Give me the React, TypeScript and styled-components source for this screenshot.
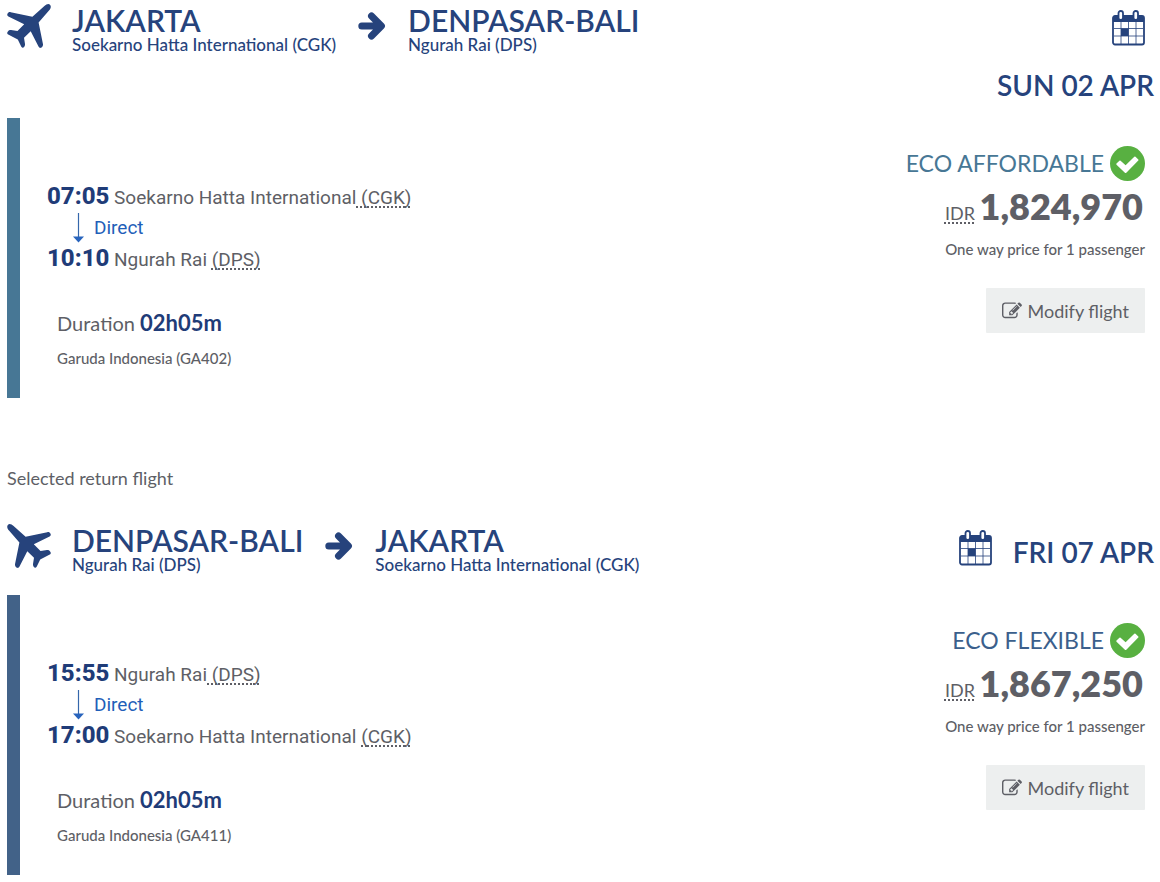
import React from "react";
import styled, { createGlobalStyle } from "styled-components";

const navy = "#26437c";
const grey = "#5e5f66";

const GlobalStyle = createGlobalStyle`
  *, *::before, *::after { box-sizing: border-box; }
  body {
    margin: 0;
    background: #fff;
    color: ${grey};
    font-family: Lato, "Liberation Sans", sans-serif;
  }
  h2, h3, p { margin: 0; }
  svg { display: block; flex: none; }
`;

const Page = styled.main`
  padding: 0 6px 0 7px;
`;

const Leg = styled.section`
  display: flex;
  flex-direction: column;
`;

const LegHeader = styled.header<{ $stacked: boolean }>`
  display: flex;
  justify-content: space-between;
  align-items: flex-start;
  min-height: ${(p) => (p.$stacked ? 118 : 75)}px;
  padding-top: 4px;
  color: ${navy};
`;

const Route = styled.div`
  display: flex;
  align-items: flex-start;
`;

const PlaneIcon = styled.svg`
  margin-right: 21px;
`;

const ArrowIcon = styled.svg`
  margin: 8px 22px 0;
`;

const City = styled.h2`
  font-size: 30px;
  line-height: 32px;
  font-weight: 600;
`;

const Airport = styled.p`
  font-size: 17px;
  line-height: 18px;
  font-weight: 500;
`;

const DateBox = styled.div<{ $stacked: boolean }>`
  display: flex;
  flex-direction: ${(p) => (p.$stacked ? "column" : "row")};
  align-items: ${(p) => (p.$stacked ? "flex-end" : "flex-start")};
  gap: 21px;
  padding-top: 6px;
`;

const CalendarWrap = styled.span<{ $stacked: boolean }>`
  margin-right: ${(p) => (p.$stacked ? 9 : 0)}px;
`;

const DateText = styled.time<{ $stacked: boolean }>`
  font-size: 28px;
  line-height: 36px;
  font-weight: 600;
  margin-top: ${(p) => (p.$stacked ? 0 : 4)}px;
`;

const LegBody = styled.div<{ $accent: string }>`
  display: flex;
  justify-content: space-between;
  min-height: 280px;
  padding: 0 9px 0 27px;
  border-left: 13px solid ${(p) => p.$accent};
`;

const Details = styled.div`
  padding-top: 63px;
`;

const Stop = styled.p`
  font: 19px/31px Roboto, sans-serif;
`;

const Clock = styled.time`
  color: #1f3c78;
  font-size: 24px;
  font-weight: 800;
`;

const Connection = styled.p`
  display: flex;
  gap: 10px;
  padding-left: 26px;
  color: #1f5fb9;
  font: 19px/30px Roboto, sans-serif;
`;

const Abbr = styled.abbr`
  text-decoration: underline dotted 2px;
  text-underline-offset: 2px;
  text-decoration-skip-ink: none;
`;

const Facts = styled.div`
  padding: 30px 0 0 10px;
`;

const Duration = styled.p`
  font-size: 20px;
  line-height: 36px;

  strong {
    color: #1f3c78;
    font-size: 22px;
    font-weight: 700;
  }
`;

const Carrier = styled.p`
  font-size: 15px;
  line-height: 34px;
  font-weight: 500;
`;

const Fare = styled.div`
  display: flex;
  flex-direction: column;
  align-items: flex-end;
  padding-top: 27px;
`;

const FareName = styled.h3<{ $accent: string }>`
  display: flex;
  align-items: center;
  gap: 6px;
  color: ${(p) => p.$accent};
  font-size: 23px;
  line-height: 36px;
  font-weight: 400;
`;

const Price = styled.p`
  padding: 3px 2px 0 0;
  font-size: 18px;
  line-height: 45px;

  strong {
    font-size: 36px;
    font-weight: 800;
  }
`;

const FareNote = styled.p`
  font-size: 15px;
  line-height: 26px;
  font-weight: 500;
`;

const ModifyButton = styled.button`
  display: flex;
  align-items: center;
  gap: 6px;
  height: 45px;
  margin-top: 26px;
  padding: 0 16px;
  border: 0;
  border-radius: 1px;
  background: #edefef;
  color: ${grey};
  font-family: inherit;
  font-size: 18px;
  cursor: pointer;
`;

const SectionLabel = styled.p`
  padding: 64px 0 26px;
  font-size: 18px;
  line-height: 32px;
`;

function Plane({ returning }: { returning: boolean }) {
  return (
    <PlaneIcon width="44" height="44" viewBox="0 0 44 44" fill="currentColor" aria-hidden="true">
      <path
        transform={returning ? "matrix(-1 0 0 1 44 0)" : undefined}
        d="M43 .7C44.500 2.200 43.700 4.600 42 6.500L31.600 18.500L36 40.300C36.200 41.800 35 43.400 33.800 43.800C32.800 44.100 32 43.500 31.500 42.400L23.700 27.200L17 33.800L18 40C18.200 41.700 17.300 43.200 16 43.700C15.200 44 14.600 43.500 14.200 42.600L10.800 35.600L1.200 30.600C0 29.900 -.1 28.500 .9 27.400C1.700 26.500 2.800 26 4 26.100L10.500 26.900L17.200 20.300L1.400 12.500C.2 11.900 0 10.900 .5 9.700C1.100 8.500 2.300 7.900 3.700 8.200L25.400 12.700L37.400 2C39.300 .3 41.600 -.6 43 .7Z"
      />
    </PlaneIcon>
  );
}

function Arrow() {
  return (
    <ArrowIcon width="28" height="28" viewBox="0 0 28 28" aria-hidden="true">
      <path
        d="M3.800 14H21M13.500 4L23.400 14L13.500 24"
        fill="none"
        stroke="currentColor"
        strokeWidth="7"
        strokeLinecap="round"
        strokeLinejoin="round"
      />
    </ArrowIcon>
  );
}

function Calendar() {
  return (
    <svg width="33" height="36" viewBox="0 0 33 36" aria-hidden="true">
      <rect x="1" y="6" width="31" height="28.500" rx="2" fill="#fff" stroke="currentColor" strokeWidth="1.800" />
      <path d="M1 6H32V12H1Z" fill="currentColor" />
      <path d="M9 12V34M16.500 12V34M24 12V34M2 18.500H31M2 26H31" stroke="currentColor" strokeWidth=".8" />
      <path d="M9 18.500H16.500V26H9Z" fill="currentColor" />
      <rect x="6.500" y="1" width="4.500" height="9" rx="2.200" fill="#fff" stroke="currentColor" strokeWidth="1.800" />
      <rect x="21.500" y="1" width="4.500" height="9" rx="2.200" fill="#fff" stroke="currentColor" strokeWidth="1.800" />
    </svg>
  );
}

function Check() {
  return (
    <svg width="35" height="35" viewBox="0 0 35 35" aria-hidden="true">
      <circle cx="17.500" cy="17.500" r="17.500" fill="#58b041" />
      <path
        d="M6.500 17.600L9.400 14.700Q10 14.200 10.600 14.700L15.600 19.300L24.300 10.800Q24.900 10.300 25.500 10.800L28.300 13.400Q28.800 14 28.300 14.600L16.300 26.800Q15.600 27.400 14.900 26.800L6.500 18.800Q6 18.200 6.500 17.600Z"
        fill="#fff"
      />
    </svg>
  );
}

function DownArrow() {
  return (
    <svg width="11" height="30" viewBox="0 0 11 30" aria-hidden="true">
      <path d="M5.500 0V24" stroke="#3567ab" strokeWidth="1.200" />
      <path d="M0 23.500H11L5.500 29.500Z" fill="#2864bd" />
    </svg>
  );
}

function Edit() {
  return (
    <svg width="20" height="20" viewBox="0 0 1792 1792" fill="currentColor" aria-hidden="true">
      <path d="M888 1184l116-116-152-152-116 116v56h96v96h56zm440-720q-16-16-33 1l-350 350q-17 17-1 33t33-1l350-350q17-17 1-33zm80 594v190q0 119-84.500 203.500t-203.500 84.500h-832q-119 0-203.500-84.500t-84.500-203.500v-832q0-119 84.500-203.500t203.500-84.500h832q63 0 117 25 15 7 18 23 3 17-9 29l-49 49q-14 14-32 8-23-6-45-6h-832q-66 0-113 47t-47 113v832q0 66 47 113t113 47h832q66 0 113-47t47-113v-126q0-13 9-22l64-64q15-15 35-7t20 29zm-96-738l288 288-672 672h-288v-288zm444 132l-92 92-288-288 92-92q28-28 68-28t68 28l152 152q28 28 28 68t-28 68z" />
    </svg>
  );
}

type Place = { city: string; airport: string; code: string };

type FlightProps = {
  from: Place;
  to: Place;
  date: string;
  departs: string;
  arrives: string;
  flightNo: string;
  fare: string;
  price: string;
  accent: string;
  fareColor: string;
  returning?: boolean;
};

function Flight({
  from, to, date, departs, arrives, flightNo, fare, price, accent, fareColor, returning = false,
}: FlightProps) {
  return (
    <Leg>
      <LegHeader $stacked={!returning}>
        <Route>
          <Plane returning={returning} />
          <div>
            <City>{from.city}</City>
            <Airport>{from.airport} ({from.code})</Airport>
          </div>
          <Arrow />
          <div>
            <City>{to.city}</City>
            <Airport>{to.airport} ({to.code})</Airport>
          </div>
        </Route>
        <DateBox $stacked={!returning}>
          <CalendarWrap $stacked={!returning}>
            <Calendar />
          </CalendarWrap>
          <DateText $stacked={!returning}>{date}</DateText>
        </DateBox>
      </LegHeader>
      <LegBody $accent={accent}>
        <Details>
          <Stop>
            <Clock>{departs}</Clock> {from.airport}
            <Abbr> ({from.code})</Abbr>
          </Stop>
          <Connection>
            <DownArrow />
            Direct
          </Connection>
          <Stop>
            <Clock>{arrives}</Clock> {to.airport} <Abbr>({to.code})</Abbr>
          </Stop>
          <Facts>
            <Duration>
              Duration <strong>02h05m</strong>
            </Duration>
            <Carrier>Garuda Indonesia ({flightNo})</Carrier>
          </Facts>
        </Details>
        <Fare>
          <FareName $accent={fareColor}>
            {fare}
            <Check />
          </FareName>
          <Price>
            <Abbr>IDR</Abbr> <strong>{price}</strong>
          </Price>
          <FareNote>One way price for 1 passenger</FareNote>
          <ModifyButton type="button">
            <Edit />
            Modify flight
          </ModifyButton>
        </Fare>
      </LegBody>
    </Leg>
  );
}

const jakarta: Place = { city: "JAKARTA", airport: "Soekarno Hatta International", code: "CGK" };
const bali: Place = { city: "DENPASAR-BALI", airport: "Ngurah Rai", code: "DPS" };

export default function App() {
  return (
    <Page>
      <GlobalStyle />
      <Flight
        from={jakarta}
        to={bali}
        date="SUN 02 APR"
        departs="07:05"
        arrives="10:10"
        flightNo="GA402"
        fare="ECO AFFORDABLE"
        price="1,824,970"
        accent="#477795"
        fareColor="#477795"
      />
      <SectionLabel>Selected return flight</SectionLabel>
      <Flight
        returning
        from={bali}
        to={jakarta}
        date="FRI 07 APR"
        departs="15:55"
        arrives="17:00"
        flightNo="GA411"
        fare="ECO FLEXIBLE"
        price="1,867,250"
        accent="#426288"
        fareColor="#3b5f8c"
      />
    </Page>
  );
}
